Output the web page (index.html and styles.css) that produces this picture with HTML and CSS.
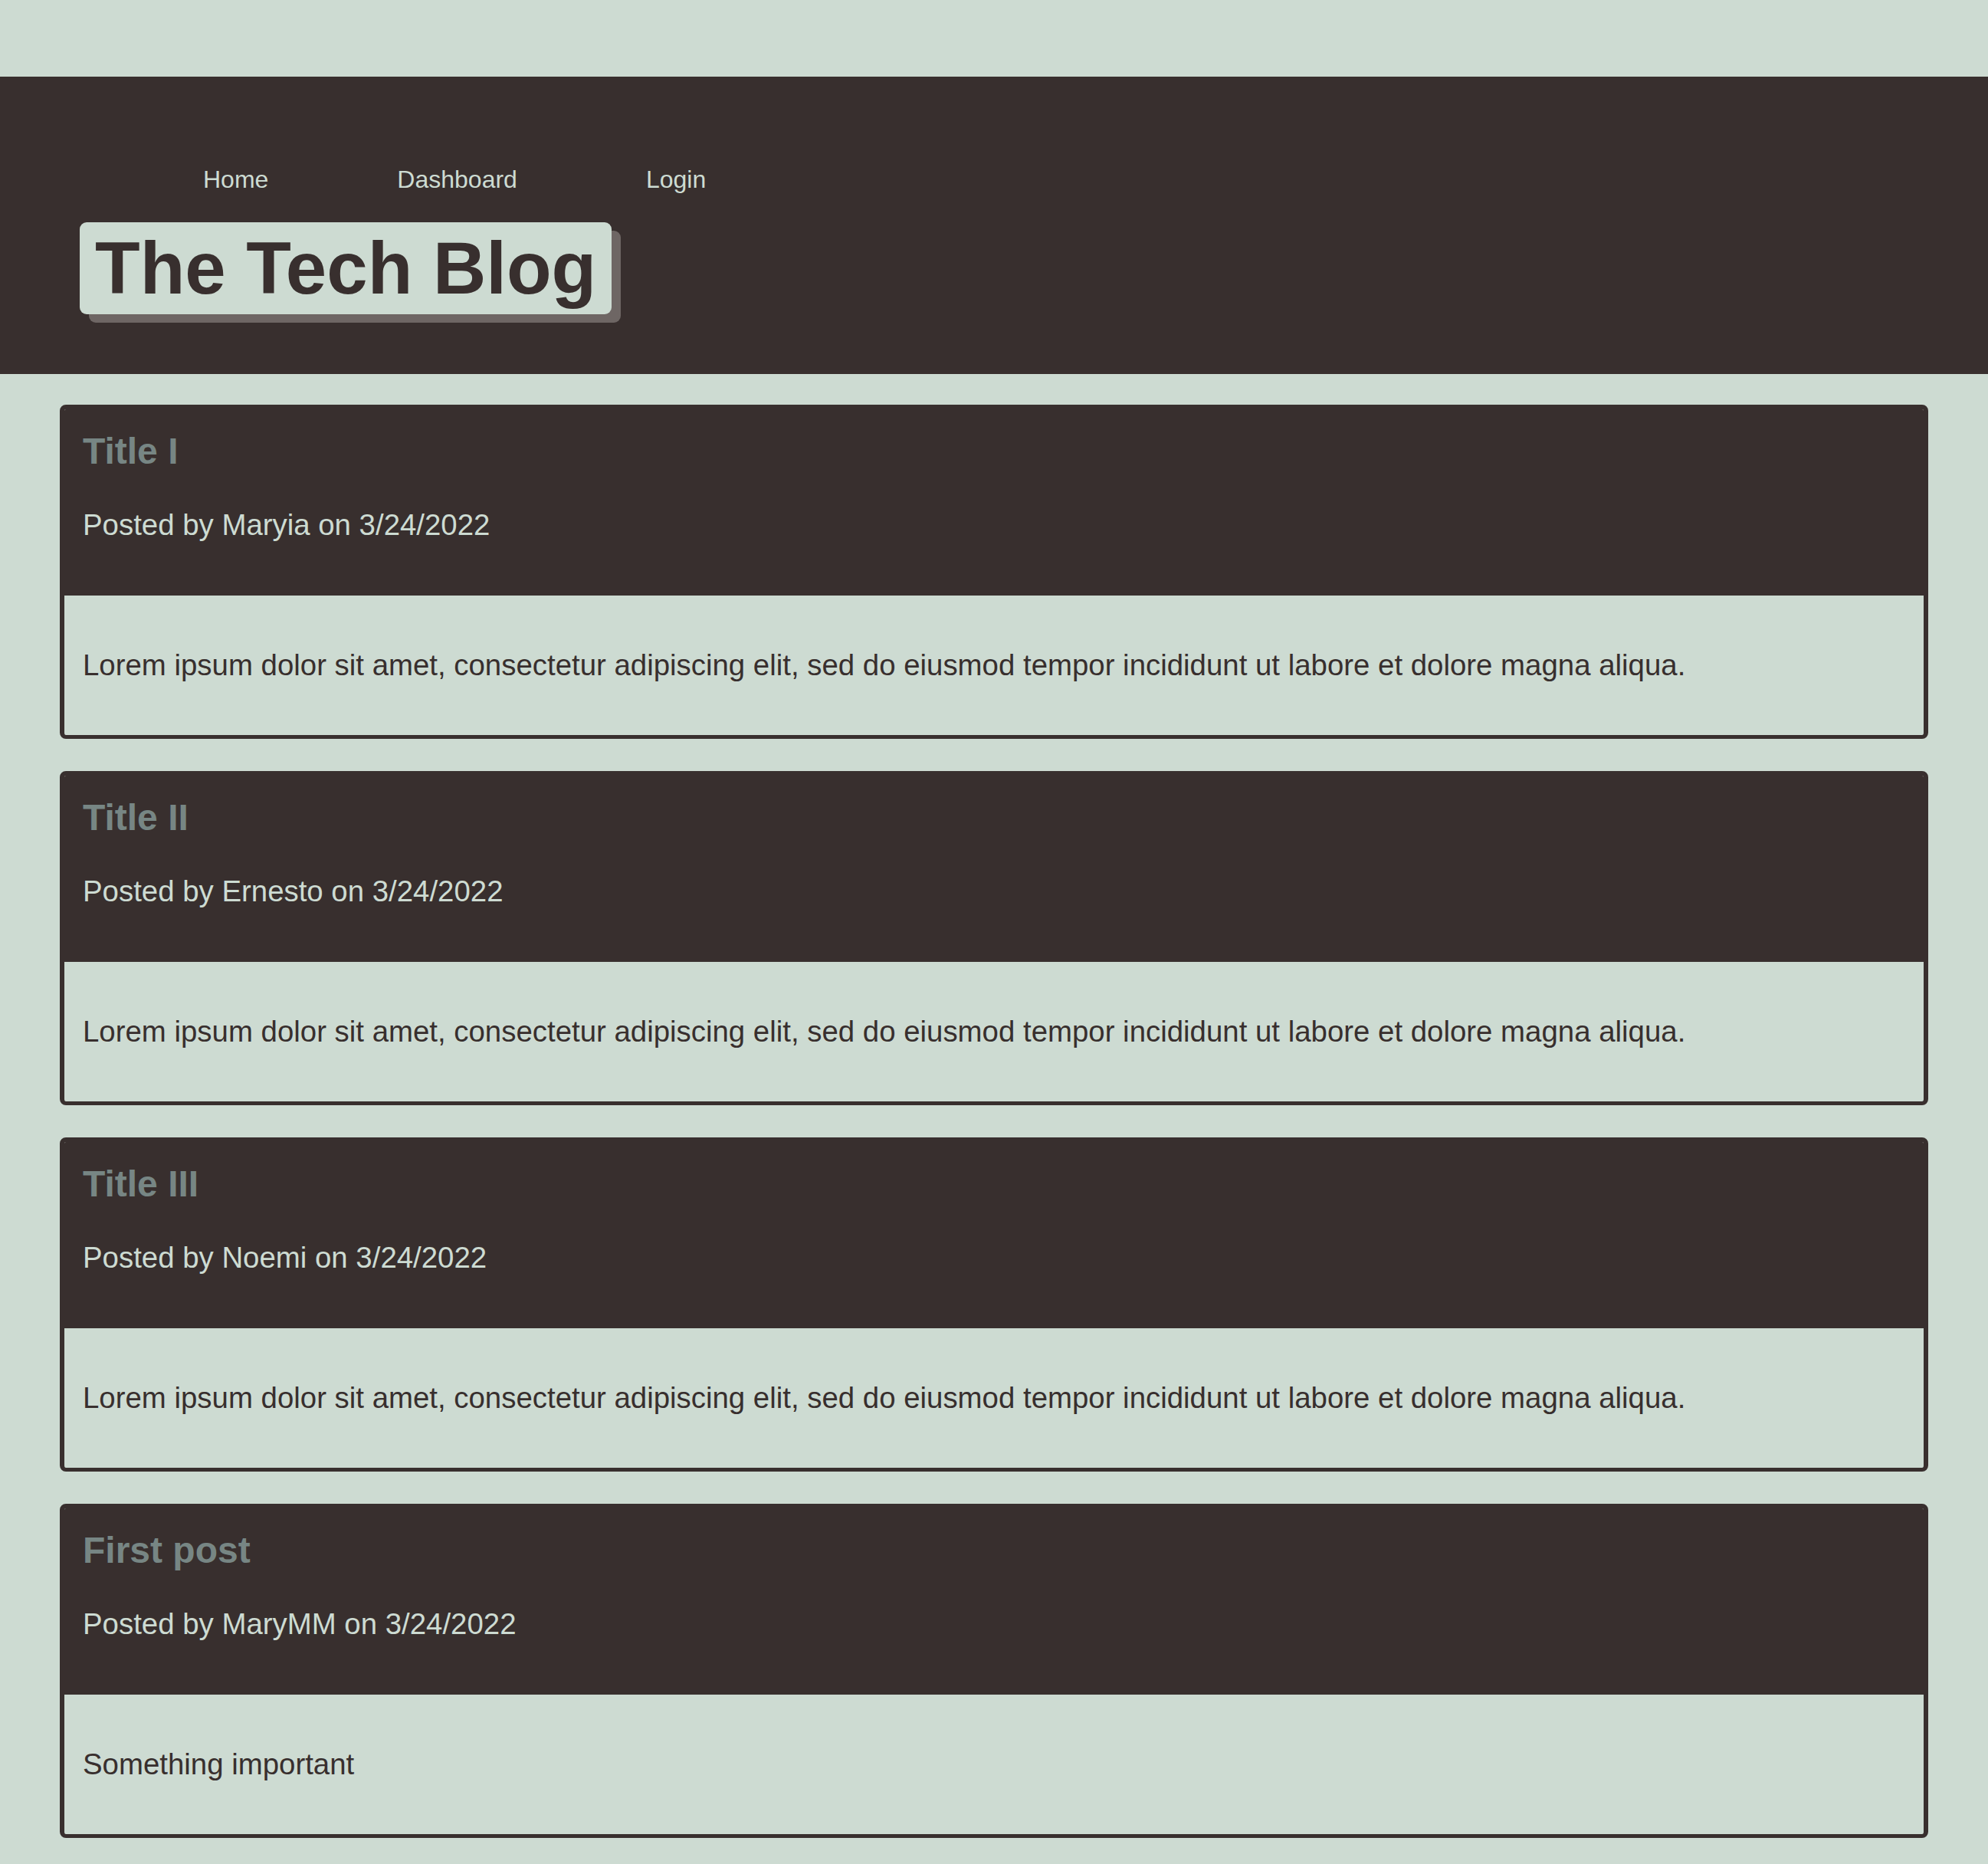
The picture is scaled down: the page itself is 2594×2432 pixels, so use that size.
FILE: index.html
```html
<!DOCTYPE html>
<html lang="en">
<head>
<meta charset="utf-8">
<title>The Tech Blog</title>
<link rel="stylesheet" href="styles.css">
</head>
<body>
<header class="site-header">
  <nav class="nav">
    <a class="nav-link" href="#">Home</a>
    <a class="nav-link" href="#">Dashboard</a>
    <a class="nav-link" href="#">Login</a>
  </nav>
  <h1 class="site-title">The Tech Blog</h1>
</header>
<main class="posts">
  <article class="post">
    <div class="post-head">
      <h2 class="post-title">Title I</h2>
      <p class="post-meta">Posted by Maryia on 3/24/2022</p>
    </div>
    <div class="post-body">
      <p class="post-text">Lorem ipsum dolor sit amet, consectetur adipiscing elit, sed do eiusmod tempor incididunt ut labore et dolore magna aliqua.</p>
    </div>
  </article>
  <article class="post">
    <div class="post-head">
      <h2 class="post-title">Title II</h2>
      <p class="post-meta">Posted by Ernesto on 3/24/2022</p>
    </div>
    <div class="post-body">
      <p class="post-text">Lorem ipsum dolor sit amet, consectetur adipiscing elit, sed do eiusmod tempor incididunt ut labore et dolore magna aliqua.</p>
    </div>
  </article>
  <article class="post">
    <div class="post-head">
      <h2 class="post-title">Title III</h2>
      <p class="post-meta">Posted by Noemi on 3/24/2022</p>
    </div>
    <div class="post-body">
      <p class="post-text">Lorem ipsum dolor sit amet, consectetur adipiscing elit, sed do eiusmod tempor incididunt ut labore et dolore magna aliqua.</p>
    </div>
  </article>
  <article class="post">
    <div class="post-head">
      <h2 class="post-title">First post</h2>
      <p class="post-meta">Posted by MaryMM on 3/24/2022</p>
    </div>
    <div class="post-body">
      <p class="post-text">Something important</p>
    </div>
  </article>
</main>
</body>
</html>
```

FILE: styles.css
```css
html, body {
  margin: 0;
  padding: 0;
}

body {
  background: #cddbd2;
  color: #382f2e;
  font-family: "Liberation Sans", Arial, sans-serif;
  padding-top: 100px;
}

.site-header {
  background: #382f2e;
  padding: 116px 0 78px;
}

.nav {
  display: flex;
  gap: 168px;
  padding-left: 265px;
}

.nav-link {
  color: #cddbd2;
  font-size: 32px;
  text-decoration: none;
}

.site-title {
  width: fit-content;
  margin: 37px 0 0 104px;
  padding: 5px 20px;
  background: #cddbd2;
  color: #382f2e;
  font-size: 96px;
  font-weight: bold;
  line-height: normal;
  border-radius: 9px;
  box-shadow: 12px 11px 0 #6e6664;
}

.posts {
  display: flex;
  flex-direction: column;
  gap: 42px;
  padding: 40px 78px 40px;
}

.post {
  border: 6px solid #382f2e;
  border-bottom-width: 5px;
  border-radius: 8px;
  overflow: hidden;
}

.post-head {
  background: #382f2e;
  padding: 27px 24px 70px;
}

.post-title {
  margin: 0 0 47px;
  font-size: 48px;
  font-weight: bold;
  color: #778684;
  line-height: normal;
}

.post-meta {
  margin: 0;
  font-size: 38.4px;
  color: #cddbd2;
  line-height: normal;
}

.post-body {
  padding: 69px 24px 69px;
}

.post-text {
  margin: 0;
  font-size: 38.4px;
  color: #382f2e;
  line-height: normal;
}
```
